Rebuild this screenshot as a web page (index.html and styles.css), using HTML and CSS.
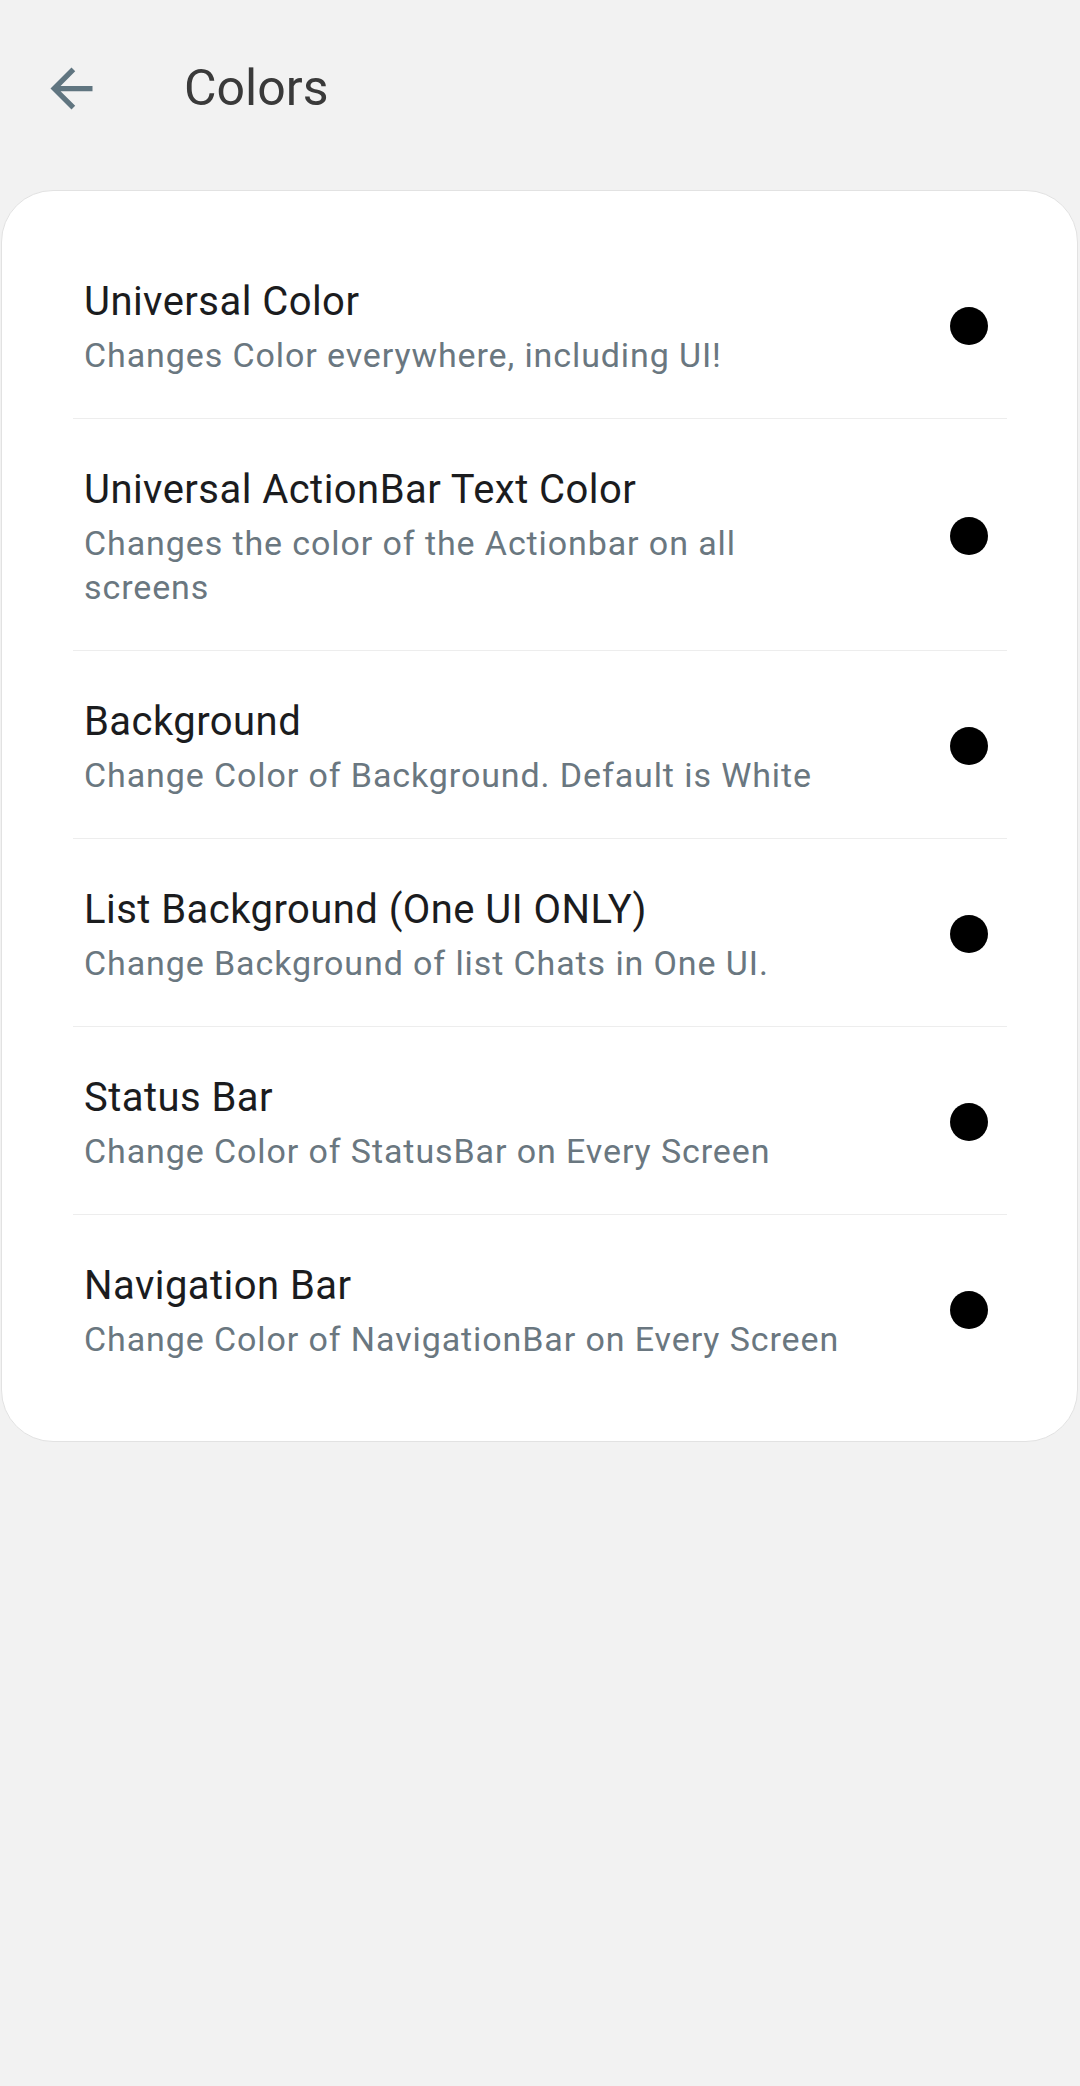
FILE: index.html
```html
<!DOCTYPE html>
<html lang="en">
<head>
<meta charset="utf-8">
<title>Colors</title>
<link rel="stylesheet" href="styles.css">
</head>
<body>
<header class="appbar">
  <svg class="back" viewBox="0 0 24 24" aria-hidden="true"><path d="M20 11H7.83l5.59-5.59L12 4l-8 8 8 8 1.41-1.41L7.83 13H20v-2z"/></svg>
  <h1 class="title">Colors</h1>
</header>
<main class="card">
  <div class="row">
    <div class="text">
      <div class="name">Universal Color</div>
      <div class="desc">Changes Color everywhere, including UI!</div>
    </div>
    <span class="dot"></span>
  </div>
  <div class="row">
    <div class="text">
      <div class="name">Universal ActionBar Text Color</div>
      <div class="desc">Changes the color of the Actionbar on all screens</div>
    </div>
    <span class="dot"></span>
  </div>
  <div class="row">
    <div class="text">
      <div class="name">Background</div>
      <div class="desc">Change Color of Background. Default is White</div>
    </div>
    <span class="dot"></span>
  </div>
  <div class="row">
    <div class="text">
      <div class="name">List Background (One UI ONLY)</div>
      <div class="desc">Change Background of list Chats in One UI.</div>
    </div>
    <span class="dot"></span>
  </div>
  <div class="row">
    <div class="text">
      <div class="name">Status Bar</div>
      <div class="desc">Change Color of StatusBar on Every Screen</div>
    </div>
    <span class="dot"></span>
  </div>
  <div class="row">
    <div class="text">
      <div class="name">Navigation Bar</div>
      <div class="desc">Change Color of NavigationBar on Every Screen</div>
    </div>
    <span class="dot"></span>
  </div>
</main>
</body>
</html>
```
FILE: styles.css
```css
* { box-sizing: border-box; }
html, body {
  margin: 0;
  padding: 0;
  background: #f2f2f2;
  font-family: Roboto, "Noto Sans", "Liberation Sans", sans-serif;
}
body { min-height: 2086px; }

.appbar {
  height: 176px;
  display: flex;
  align-items: center;
  padding-left: 40px;
  gap: 81px;
}
.back {
  width: 63px;
  height: 63px;
  fill: #607580;
  flex: none;
}
.title {
  margin: 0;
  font-size: 50px;
  line-height: 50px;
  font-weight: 400;
  color: #3a3a3a;
}

.card {
  margin: 14px 2px 0 1px;
  background: #ffffff;
  border: 1.5px solid #e2e2e2;
  border-radius: 52px;
  padding: 40px 0 39px;
}
.row {
  display: flex;
  align-items: center;
  margin: 0 70px 0 71px;
  padding: 43px 19px 41px 11px;
  border-bottom: 1.5px solid #ededed;
}
.row:last-child { border-bottom: none; }
.text { flex: 1; min-width: 0; }
.name {
  font-size: 40px;
  line-height: 56px;
  letter-spacing: 0.45px;
  color: #1b1c1e;
}
.desc {
  margin-top: 3px;
  font-size: 34px;
  line-height: 44px;
  letter-spacing: 0.9px;
  color: #6a7780;
}
.dot {
  flex: none;
  width: 38px;
  height: 38px;
  border-radius: 50%;
  background: #000;
  margin-left: 95px;
}
```
